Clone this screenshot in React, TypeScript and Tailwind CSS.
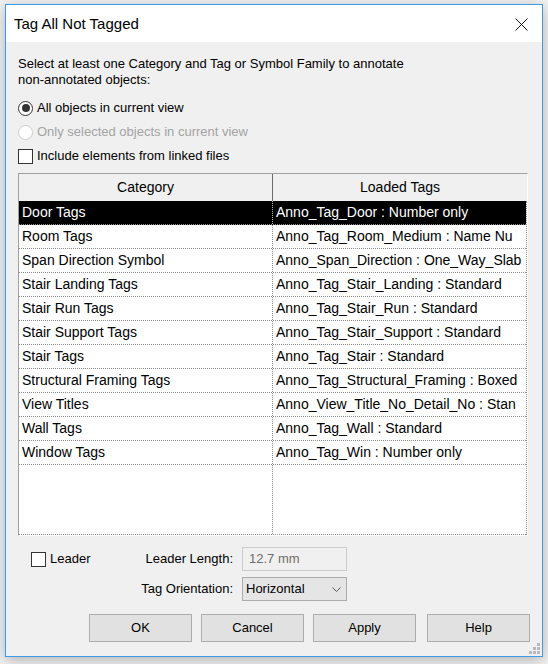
const rows: [string, string][] = [
  ['Door Tags', 'Anno_Tag_Door : Number only'],
  ['Room Tags', 'Anno_Tag_Room_Medium : Name Nu'],
  ['Span Direction Symbol', 'Anno_Span_Direction : One_Way_Slab'],
  ['Stair Landing Tags', 'Anno_Tag_Stair_Landing : Standard'],
  ['Stair Run Tags', 'Anno_Tag_Stair_Run : Standard'],
  ['Stair Support Tags', 'Anno_Tag_Stair_Support : Standard'],
  ['Stair Tags', 'Anno_Tag_Stair : Standard'],
  ['Structural Framing Tags', 'Anno_Tag_Structural_Framing : Boxed'],
  ['View Titles', 'Anno_View_Title_No_Detail_No : Stan'],
  ['Wall Tags', 'Anno_Tag_Wall : Standard'],
  ['Window Tags', 'Anno_Tag_Win : Number only'],
];

const Radio = ({ checked, disabled }: { checked?: boolean; disabled?: boolean }) => (
  <span
    className={`flex h-[15px] w-[15px] items-center justify-center rounded-full border bg-white ${
      disabled ? 'border-[#cccccc]' : 'border-[#333333]'
    }`}
  >
    {checked && <span className="h-[8px] w-[8px] rounded-full bg-[#333333]" />}
  </span>
);

const Check = () => <span className="block h-[15px] w-[15px] border border-[#333333] bg-white" />;

const Button = ({ label, className = '' }: { label: string; className?: string }) => (
  <button
    type="button"
    className={`h-[28px] w-[103px] border border-[#adadad] bg-[#e1e1e1] text-[13px] text-black ${className}`}
  >
    {label}
  </button>
);

export default function App() {
  return (
    <div className="min-h-screen bg-[#f3f3f3] pl-[5px] pt-[4px] font-['Liberation_Sans',Arial,sans-serif] text-black">
      <div className="relative flex h-[653px] w-[538px] flex-col border border-[#3c9be6] bg-[#f0f0f0] shadow-[0_3px_14px_rgba(0,0,0,0.28)]">
        {/* Title bar */}
        <div className="flex h-[37px] items-center justify-between bg-white pl-[8px] pr-[14px] pt-[2px]">
          <span className="text-[15px]">Tag All Not Tagged</span>
          <svg width="13" height="13" viewBox="0 0 13 13">
            <path d="M0.5 0.5 L12.5 12.5 M12.5 0.5 L0.5 12.5" stroke="#111" strokeWidth="1" />
          </svg>
        </div>

        <div className="flex flex-1 flex-col px-3">
          <p className="mt-[14px] text-[13px] leading-[16px]">
            Select at least one Category and Tag or Symbol Family to annotate
            <br />
            non-annotated objects:
          </p>

          <div className="mt-[8px] flex h-[24px] items-center gap-[4px] text-[13px]">
            <Radio checked />
            <span>All objects in current view</span>
          </div>
          <div className="flex h-[24px] items-center gap-[4px] text-[13px] text-[#a3a3a3]">
            <Radio disabled />
            <span>Only selected objects in current view</span>
          </div>
          <div className="flex h-[24px] items-center gap-[4px] text-[13px]">
            <Check />
            <span>Include elements from linked files</span>
          </div>

          {/* Category / tag grid */}
          <div className="mt-[5px] flex h-[363px] w-[510px] flex-col border border-[#a0a0a0] border-b-white border-r-white bg-white text-[14px]">
            <div className="flex h-[27px] bg-[#f0f0f0]">
              <div className="flex w-[253px] items-center justify-center">Category</div>
              <div className="flex flex-1 items-center justify-center border-l border-[#6b6b6b]">Loaded Tags</div>
            </div>
            <div className="flex flex-1 flex-col border-r border-dotted border-[#8a8a8a]">
              {rows.map(([category, tag], i) => (
                <div
                  key={category}
                  className={`flex h-[24px] border-b border-dotted border-[#8a8a8a] leading-[23px] ${
                    i === 0 ? 'bg-black text-white' : ''
                  }`}
                >
                  <div className="w-[253px] whitespace-nowrap pl-[3px]">{category}</div>
                  <div
                    className={`flex-1 whitespace-nowrap border-l border-dotted pl-[3px] ${
                      i === 0 ? 'border-[#bbbbbb]' : 'border-[#8a8a8a]'
                    }`}
                  >
                    {tag}
                  </div>
                </div>
              ))}
              <div className="flex flex-1 border-b border-dotted border-[#8a8a8a]">
                <div className="w-[253px]" />
                <div className="flex-1 border-l border-dotted border-[#8a8a8a]" />
              </div>
            </div>
          </div>

          {/* Leader options */}
          <div className="mt-[11px] grid grid-cols-[215px_105px] gap-x-[9px] gap-y-[6px] text-[13px]">
            <div className="flex h-[24px] items-center justify-between">
              <div className="flex items-center gap-[4px] pl-[13px]">
                <Check />
                <span>Leader</span>
              </div>
              <span>Leader Length:</span>
            </div>
            <div className="flex h-[24px] items-center border border-[#cccccc] bg-[#f0f0f0] pl-[6px] text-[#6d6d6d]">
              12.7 mm
            </div>
            <div className="flex h-[24px] items-center justify-end">Tag Orientation:</div>
            <div className="flex h-[24px] items-center justify-between border border-[#acacac] bg-[#e5e5e5] pl-[3px] pr-[5px]">
              <span>Horizontal</span>
              <svg width="9" height="5" viewBox="0 0 9 5">
                <path d="M0.5 0.5 L4.5 4.5 L8.5 0.5" fill="none" stroke="#555" strokeWidth="1" />
              </svg>
            </div>
          </div>

          <div className="mt-[13px] flex justify-end gap-[9px]">
            <Button label="OK" />
            <Button label="Cancel" />
            <Button label="Apply" />
            <Button label="Help" className="ml-[2px]" />
          </div>
        </div>

        {/* Resize grip */}
        <svg width="11" height="11" viewBox="0 0 11 11" className="absolute bottom-[2px] right-[2px]">
          <rect x="8" y="0" width="3" height="3" fill="#b9b9b9" />
          <rect x="4" y="4" width="3" height="3" fill="#b9b9b9" />
          <rect x="8" y="4" width="3" height="3" fill="#b9b9b9" />
          <rect x="0" y="8" width="3" height="3" fill="#b9b9b9" />
          <rect x="4" y="8" width="3" height="3" fill="#b9b9b9" />
          <rect x="8" y="8" width="3" height="3" fill="#b9b9b9" />
        </svg>
      </div>
    </div>
  );
}
